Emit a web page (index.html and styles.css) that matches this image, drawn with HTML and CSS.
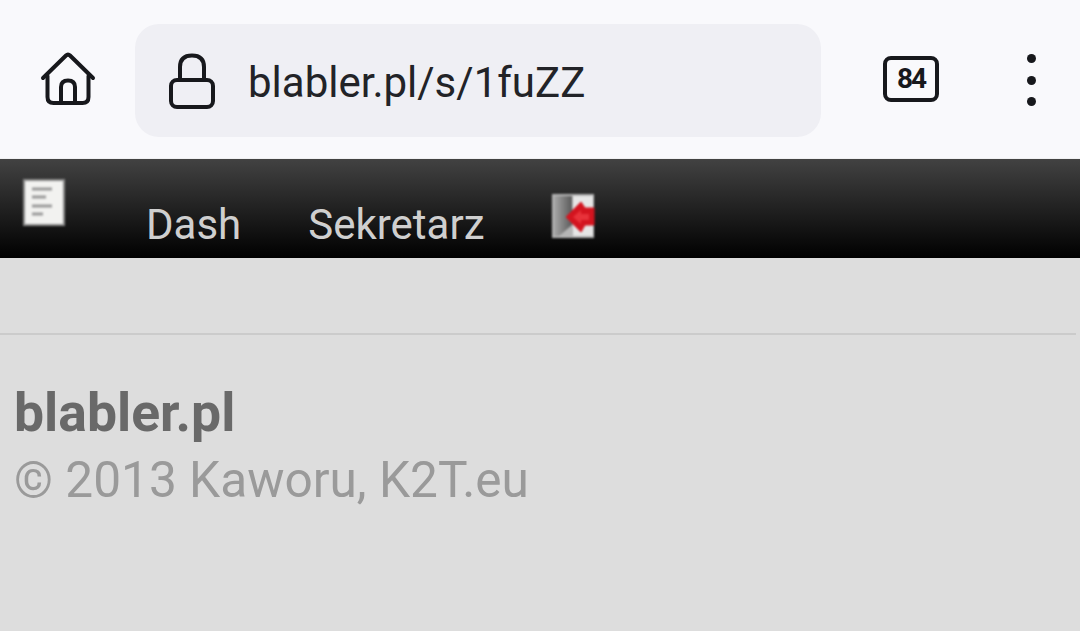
FILE: index.html
```html
<!DOCTYPE html>
<html lang="pl">
<head>
<meta charset="utf-8">
<title>blabler.pl</title>
<link rel="stylesheet" href="styles.css">
</head>
<body>
<header class="chrome">
  <svg class="home" width="56" height="56" viewBox="0 0 56 56" fill="none" stroke="#17181c" stroke-width="4" stroke-linecap="round" stroke-linejoin="round">
    <path d="M3 27 L26 4.500 Q28 2.500 30 4.500 L53 27"/>
    <path d="M7.500 25 V46 Q7.500 52 13.500 52 H42.500 Q48.500 52 48.500 46 V25"/>
    <path d="M21 52 V36 Q21 29.500 28 29.500 Q35 29.500 35 36 V52"/>
  </svg>
  <div class="address">
    <svg class="lock" width="48" height="58" viewBox="0 0 48 58" fill="none" stroke="#17181c" stroke-width="4" stroke-linejoin="round">
      <rect x="3" y="28" width="42" height="27" rx="6"/>
      <path d="M12 28 V15 Q12 3.500 24 3.500 Q36 3.500 36 15 V28"/>
    </svg>
    <span class="url">blabler.pl/s/1fuZZ</span>
  </div>
  <div class="tabs">84</div>
  <div class="menu"><i></i><i></i><i></i></div>
</header>
<nav class="nav">
  <svg class="doc" width="42" height="47" viewBox="0 0 42 47">
    <rect x="1" y="1" width="40" height="45" fill="#f2f2f0" stroke="#8a8a8a" stroke-width="2"/>
    <path d="M9 10H29M9 18H23M9 27H29M9 35H20" stroke="#9a9a9a" stroke-width="3"/>
  </svg>
  <a class="link link-dash">Dash</a>
  <a class="link link-sek">Sekretarz</a>
  <svg class="exit" width="46" height="46" viewBox="0 0 46 46">
    <defs>
      <linearGradient id="door" x1="0" x2="1" y1="0" y2="0">
        <stop offset="0" stop-color="#a8a8a8"/>
        <stop offset="1" stop-color="#5a5a5a"/>
      </linearGradient>
    </defs>
    <rect x="1" y="1" width="42" height="44" fill="#b5b5b5"/>
    <rect x="22" y="3" width="20" height="40" fill="#e6e6e6"/>
    <path d="M3 3H21V32L8 43H3Z" fill="url(#door)"/>
    <path d="M15 24 L30 9 L34 15 H43 V32 H34 L30 39 Z" fill="#d3141f" stroke="#d3141f" stroke-width="1" stroke-linejoin="round"/>
    <path d="M22 24 L30 17 V21 H38 V27 H30 V31 Z" fill="#e8323a"/>
  </svg>
</nav>
<main class="content">
  <hr class="rule">
  <h1 class="title">blabler.pl</h1>
  <p class="copy">© 2013 Kaworu, K2T.eu</p>
</main>
</body>
</html>
```

FILE: styles.css
```css
* { box-sizing: border-box; }
html, body { margin: 0; height: 100%; }
body {
  background: #dddddd;
  font-family: Roboto, "Liberation Sans", sans-serif;
  overflow: hidden;
}
.chrome {
  height: 159px;
  background: #f9f9fc;
  display: flex;
  align-items: center;
  padding: 0 0 0 40px;
  border-bottom: 1px solid #f0f0f2;
}
.home { margin: 0 39px 0 0; flex: none; }
.address {
  width: 686px;
  height: 113px;
  margin-top: 3px;
  background: #efeff4;
  border-radius: 24px;
  display: flex;
  align-items: center;
  padding-left: 33px;
}
.lock { flex: none; margin-right: 32px; }
.url { font-size: 42px; color: #222327; margin-top: 3px; }
.tabs {
  width: 56px;
  height: 46px;
  margin: -1px 0 0 62px;
  border: 4px solid #17181c;
  border-radius: 8px;
  font-size: 28px;
  font-weight: 700;
  letter-spacing: -2px;
  color: #17181c;
  display: flex;
  align-items: center;
  justify-content: center;
}
.menu {
  margin: 2px 0 0 88px;
  display: flex;
  flex-direction: column;
  gap: 12.500px;
}
.menu i { display: block; width: 9px; height: 9px; border-radius: 50%; background: #17181c; }
.nav {
  height: 99px;
  background: linear-gradient(#424242, #000);
  display: flex;
  align-items: flex-start;
  padding-left: 23px;
}
.doc { margin-top: 20px; flex: none; filter: blur(0.8px); }
.link { font-size: 42px; color: #cfcfcf; margin-top: 42px; line-height: 47px; }
.link-dash { margin-left: 81px; }
.link-sek { margin-left: 67px; }
.exit { margin: 34px 0 0 67px; flex: none; filter: blur(1px); }
.content { padding: 0; }
.rule {
  margin: 75px 4px 0 0;
  border: 0;
  height: 2px;
  background: #cbcbcb;
}
.title {
  margin: 49px 0 0 14px;
  font-size: 53.500px;
  line-height: 58px;
  font-weight: 700;
  color: #696969;
}
.copy {
  margin: 9px 0 0 14px;
  font-size: 49.600px;
  line-height: 58px;
  color: #9a9a9a;
}
```
